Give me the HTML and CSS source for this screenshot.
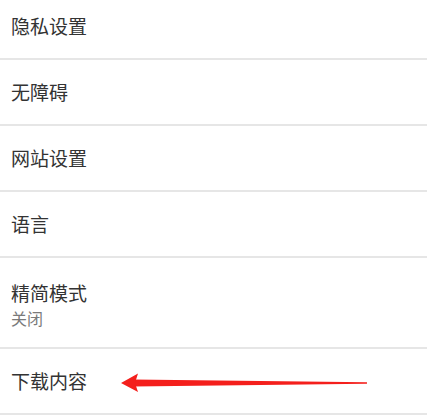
FILE: index.html
```html
<!DOCTYPE html>
<html lang="zh-CN">
<head>
  <meta charset="UTF-8">
  <meta name="viewport" content="width=device-width, initial-scale=1.0">
  <title>设置</title>
  <link rel="stylesheet" href="styles.css">
</head>
<body>

<ul class="settings">
  <li class="row"><span class="title">隐私设置</span></li>
  <li class="row"><span class="title">无障碍</span></li>
  <li class="row"><span class="title">网站设置</span></li>
  <li class="row"><span class="title">语言</span></li>
  <li class="row row-tall">
    <span class="title">精简模式</span>
    <span class="summary">关闭</span>
  </li>
  <li class="row row-marked">
    <span class="title">下载内容</span>
    <!-- flecha roja encima de la fila -->
    <svg class="arrow" viewBox="0 0 427 64" preserveAspectRatio="none">
      <polygon points="133,30.5 367,33.3 367,34.7 133,37.5" fill="#f41f1c"/>
      <polygon points="121,34 138,24.5 135,34 138,43" fill="#f41f1c"/>
    </svg>
  </li>
</ul>

</body>
</html>
```

FILE: styles.css
```css
body {
  margin: 0;
  padding: 0;
  background-color: #fff;
  font-family: "Noto Sans CJK SC", "Noto Sans", sans-serif;
  color: #333;
  overflow: hidden;
}

.settings {
  list-style: none;
  margin: -6px 0 0 0;
  padding: 0;
}

.row {
  display: flex;
  flex-direction: column;
  justify-content: center;
  height: 64px;
  padding: 0 11px;
  border-bottom: 2px solid #e6e6e6;
}

.title {
  font-size: 19px;
  line-height: 26px;
}

.row-tall {
  height: 84px;
  padding-top: 5px;
}

.summary {
  font-size: 16px;
  line-height: 24px;
  color: #7a7a7a;
}

.row-marked {
  position: relative;
}

.arrow {
  position: absolute;
  left: 0;
  top: 0;
  width: 100%;
  height: 100%;
}
```
